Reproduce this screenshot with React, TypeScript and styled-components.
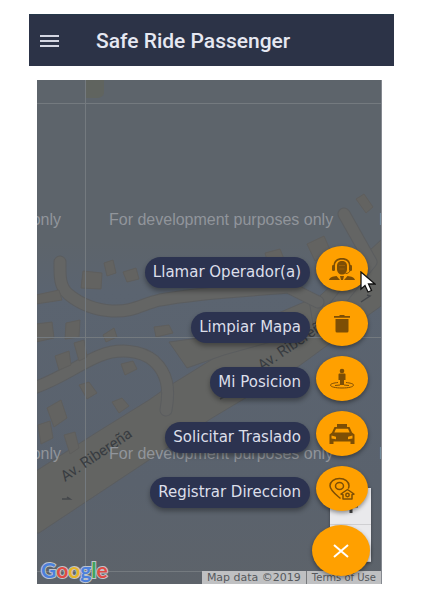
import React from "react";
import styled, { createGlobalStyle } from "styled-components";

const GlobalStyle = createGlobalStyle`
  *, *::before, *::after { box-sizing: border-box; }
  body { margin: 0; background: #fff; font-family: "DejaVu Sans", sans-serif; }
`;

const Page = styled.div`
  display: flex;
  flex-direction: column;
  gap: 14px;
  min-height: 100vh;
  padding: 14px 28px 5px 29px;
`;

const Header = styled.header`
  display: flex;
  align-items: center;
  gap: 36px;
  height: 52px;
  padding: 0 10px;
  background: #2c3347;
  border-top: 1px solid #25384a;
`;

const MenuButton = styled.button`
  display: flex;
  padding: 0;
  border: 0;
  background: none;
  color: #d4d6e2;
`;

const Title = styled.h1`
  margin: 0;
  color: #e6e8f2;
  font: 500 21px/24px Roboto, sans-serif;
  white-space: nowrap;
`;

const MapPanel = styled.main`
  position: relative;
  display: flex;
  flex: 1;
  flex-direction: column;
  justify-content: flex-end;
  margin: 0 12px 0 8px;
  padding: 165px 11px 8px 8px;
  overflow: hidden;
  background: #5d646b;
  border-right: 1px solid #858990;
`;

const MapDrawing = styled.svg`
  position: absolute;
  inset: 0;
  width: 100%;
  height: 100%;
`;

const ZoomControl = styled.div`
  position: absolute;
  right: 10px;
  bottom: 22px;
  display: flex;
  flex-direction: column;
  width: 41px;
  background: #e9e9ec;
  box-shadow: 0 1px 3px #0005;
`;

const ZoomButton = styled.button`
  display: grid;
  place-items: center;
  height: 37px;
  padding: 0;
  border: 0;
  border-bottom: 1px solid #cfcfd2;
  background: none;
  color: #444;
`;

const Attribution = styled.footer`
  position: absolute;
  right: 0;
  bottom: 0;
  display: flex;
  gap: 5px;
  height: 13px;
  padding: 0 5px;
  background: #bfc0c2;
  color: #55585c;
  font-size: 10px;
  line-height: 13px;
  white-space: nowrap;
`;

const Credit = styled.span`
  font-size: 11px;
`;

const Divider = styled.span`
  width: 1px;
  background: #77797c;
`;

const TermsLink = styled.a`
  color: inherit;
  text-decoration: none;
`;

const Actions = styled.div`
  position: relative;
  display: flex;
  flex-direction: column;
  align-items: flex-end;
  gap: 10px;
`;

const ActionRow = styled.div`
  display: flex;
  align-items: flex-end;
  gap: 6px;
  margin-right: 2px;
`;

const ActionLabel = styled.label`
  margin-bottom: 3px;
  padding: 0 9px 0 8px;
  border-radius: 16px;
  background: #2c3350;
  box-shadow: 0 3px 5px #0005;
  color: #dcdfea;
  font-size: 15px;
  line-height: 31px;
  white-space: nowrap;
`;

const RoundButton = styled.button<{ $main?: boolean }>`
  display: grid;
  place-items: center;
  width: ${(p) => (p.$main ? 58 : 52)}px;
  height: ${(p) => (p.$main ? 51 : 45)}px;
  margin-top: ${(p) => (p.$main ? 4 : 0)}px;
  padding: 0;
  border: 0;
  border-radius: 50%;
  background: #ffa000;
  box-shadow: 0 2px 4px #0006;
  color: ${(p) => (p.$main ? "#fff" : "#7d4e05")};
`;

const Pointer = styled.svg`
  position: absolute;
  top: 25px;
  right: -6px;
  pointer-events: none;
`;

const OperatorIcon = () => (
  <svg width="28" height="24" viewBox="0 0 28 24" fill="currentColor">
    <path d="M5.500 9C5.500 3.500 9 1 14 1s8.500 2.500 8.500 8h-1.500C21 4.800 18 2.800 14 2.800S7 4.800 7 9z" />
    <path d="M9 9c0-3.500 2-5 5-5s5 1.500 5 5v3c0 3.500-2.200 5.500-5 5.500S9 15.500 9 12z" />
    <rect x="4" y="8" width="3" height="6" rx="1.300" />
    <rect x="21" y="8" width="3" height="6" rx="1.300" />
    <path d="M22 13.500c-.5 2-2 3-4.500 3" fill="none" stroke="currentColor" strokeWidth="1" />
    <path d="M1 23c.4-2.500 3.500-3.500 7.500-4l3.500 4zM27 23c-.4-2.500-3.500-3.500-7.500-4L16 23zM12 19h4l-1 4h-2z" />
    <path d="M11 8.500h6M11.500 12h5" stroke="#a96905" strokeWidth=".7" />
  </svg>
);

const TrashIcon = () => (
  <svg width="18" height="20" viewBox="0 0 18 20" fill="currentColor">
    <path d="M1 2h5l1-1h4l1 1h5v1.800H1zM2.500 5h13v12a1.500 1.500 0 0 1-1.500 1.500H4A1.500 1.500 0 0 1 2.500 17z" />
  </svg>
);

const PositionIcon = () => (
  <svg width="26" height="22" viewBox="0 0 26 22" fill="currentColor">
    <circle cx="13" cy="3" r="2.300" />
    <path d="M9.500 6.500q0-1 1-1h5q1 0 1 1v5.500h-1.500V17h-4v-5H9.500z" />
    <path d="M9 14.500c-4 .4-7.500 1.300-7.500 2.500 0 1.900 5 3 11.500 3s11.500-1.100 11.500-3c0-1.200-3.500-2.100-7.500-2.500M6 17.500l5-.5M20 17.500l-5-.5" fill="none" stroke="currentColor" />
  </svg>
);

const TaxiIcon = () => (
  <svg width="28" height="22" viewBox="0 0 28 22" fill="currentColor" fillRule="evenodd">
    <path d="M9 1h10v3h2.500L24 9.500l2.500 2V21h-4v-2.500h-17V21h-4v-9.500L4 9.500 6.500 4H9zM8 5.800 6.300 9.500h15.400L20 5.800zM3.500 12.500v3l4.500.8v-2.500zM24.500 12.500v3l-4.500.8v-2.500z" />
  </svg>
);

const AddressIcon = () => (
  <svg width="28" height="24" viewBox="0 0 28 24" fill="none" stroke="currentColor" strokeWidth="1.500">
    <path d="M12.500 21.500C8.500 18 2 13.500 2 8.800 2 4.500 6 1.500 11.500 1.500S21 4.500 21 8.800c0 1-.2 2-.7 2.800" />
    <ellipse cx="11.500" cy="9" rx="4" ry="3.500" />
    <path d="M19.500 12.500 26 17l-2 .8V22h-9v-4.200l-2-.8z" strokeLinejoin="round" />
    <circle cx="19.500" cy="18" r="1.700" />
  </svg>
);

const ACTIONS = [
  { id: "operator", label: "Llamar Operador(a)", Icon: OperatorIcon },
  { id: "clear", label: "Limpiar Mapa", Icon: TrashIcon },
  { id: "position", label: "Mi Posicion", Icon: PositionIcon },
  { id: "ride", label: "Solicitar Traslado", Icon: TaxiIcon },
  { id: "address", label: "Registrar Direccion", Icon: AddressIcon },
];

const StreetMap = () => (
  <MapDrawing viewBox="37 80 345 504" preserveAspectRatio="xMaxYMax slice" aria-hidden="true">
    <defs>
      <linearGradient id="ground" x1="0" y1="0" x2="0" y2="1">
        <stop offset="0" stopColor="#5d646b" />
        <stop offset=".32" stopColor="#5d646b" />
        <stop offset=".42" stopColor="#5b6470" />
        <stop offset=".8" stopColor="#5a626d" />
        <stop offset="1" stopColor="#5d636a" />
      </linearGradient>
    </defs>
    <rect x="37" y="80" width="345" height="504" fill="url(#ground)" />
    <g fill="#636462" stroke="#5b5d5f" strokeWidth="1">
      <path d="M37 471 100 431 150 400 170 386 220 355 300 315 382 240V306L300 366 213 418 150 460 40 533H37z" />
      <path d="M170 342 230 334 310 300 315 330 225 355 188 368z" />
    </g>
    <g fill="none" strokeLinecap="round" strokeLinejoin="round">
      <g stroke="#5b5d5f" strokeWidth="13">
        <path d="M61 262c0 12-1 24 8 32 12 10 28 16 44 17 22 1 30-7 48-11 45-8 75-8 128-13l30 15" />
        <path d="M32 389C60 380 78 365 100 356c20-8 42-6 55 5 13 12 16 27 12 49" />
        <path d="M345 214 372 262 325 320" />
      </g>
      <g stroke="#646564" strokeWidth="11">
        <path d="M61 262c0 12-1 24 8 32 12 10 28 16 44 17 22 1 30-7 48-11 45-8 75-8 128-13l30 15" />
        <path d="M32 389C60 380 78 365 100 356c20-8 42-6 55 5 13 12 16 27 12 49" />
        <path d="M345 214 372 262 325 320" />
      </g>
    </g>
    <g fill="#636361" stroke="#5e5e5d">
      <path d="M86 80h19v13q-1 5-8 5H86z" fill="#60645f" stroke="none" />
      <path d="m84 271 19 2-1 16-20-1zM105 263l9-3 3 13-9 3zM124 272l13-4 3 11-12 3zM37 295l23-5 3 10-26 4zM67 323l14-3-1 17-14 2zM37 324l16-2 2 16-18 4zM75 343l10-3 3 17-8 4zM56 356l14-5 2 14-12 5zM104 335l11-7 3 9-11 5zM122 364l12-3 4 8-12 6zM80 385l10-3 8 11-10 6zM113 402l10-4 7 8-10 7zM48 408l14-8 6 18-13 9zM65 435l11-3 4 16-9 6zM39 425l12-4 3 17-12 6zM155 327l15-2 4 8-17 4zM357 199l8-5 9 13-7 6zM308 244l17-8 7 16-16 9zM266 253l15-4 4 10-16 5z" />
    </g>
    <path d="M63 499h8l-3-2M253 381l-32 18M362 302l9-6-3-1" fill="none" stroke="#44474b" strokeWidth="1.500" />
    <g stroke="#747a7f" strokeWidth="1">
      <path d="M37 103.500H382M37 337.500H382M37 571.500H382M86.500 80V584" />
    </g>
    <g fontFamily="Roboto, sans-serif" fontSize="15" fill="#383c41">
      <text transform="translate(66 482) rotate(-34)">Av. Ribereña</text>
      <text transform="translate(263 371) rotate(-34)">Av. Ribereña</text>
    </g>
    <g fontFamily="Liberation Sans, sans-serif" fontSize="16" fill="#91959b">
      {[225, 459].map((y) => (
        <g key={y}>
          <text x="62" y={y} textAnchor="end">only</text>
          <text x="110" y={y}>For development purposes only</text>
          <text x="380" y={y}>F</text>
        </g>
      ))}
    </g>
    <text x="42" y="578" fontFamily="Lato, sans-serif" fontWeight="700" fontSize="21" stroke="#bfc4cc" strokeWidth="2" paintOrder="stroke">
      <tspan fill="#4c80dc">G</tspan>
      <tspan fill="#df4b43">o</tspan>
      <tspan fill="#e6b52a">o</tspan>
      <tspan fill="#4c80dc">g</tspan>
      <tspan fill="#3fa45c">l</tspan>
      <tspan fill="#df4b43">e</tspan>
    </text>
  </MapDrawing>
);

export default function App() {
  return (
    <>
      <GlobalStyle />
      <Page>
        <Header>
          <MenuButton aria-label="Menu">
            <svg width="21" height="14" viewBox="0 0 21 14" stroke="currentColor" strokeWidth="2">
              <path d="M1 2h19M1 7h19M1 12h19" />
            </svg>
          </MenuButton>
          <Title>Safe Ride Passenger</Title>
        </Header>
        <MapPanel>
          <StreetMap />
          <ZoomControl>
            <ZoomButton aria-label="Zoom in">
              <svg width="14" height="14" viewBox="0 0 14 14" stroke="currentColor" strokeWidth="3">
                <path d="M7 0v14M0 7h14" />
              </svg>
            </ZoomButton>
            <ZoomButton aria-label="Zoom out">
              <svg width="14" height="14" viewBox="0 0 14 14" stroke="currentColor" strokeWidth="3">
                <path d="M0 7h14" />
              </svg>
            </ZoomButton>
          </ZoomControl>
          <Attribution>
            <Credit>Map data ©2019</Credit>
            <Divider />
            <TermsLink href="#terms">Terms of Use</TermsLink>
          </Attribution>
          <Actions>
            {ACTIONS.map(({ id, label, Icon }) => (
              <ActionRow key={id}>
                <ActionLabel htmlFor={id}>{label}</ActionLabel>
                <RoundButton id={id}>
                  <Icon />
                </RoundButton>
              </ActionRow>
            ))}
            <RoundButton $main aria-label="Close">
              <svg width="16" height="14" viewBox="0 0 16 14" stroke="currentColor" strokeWidth="2">
                <path d="M1 1l14 12M15 1 1 13" />
              </svg>
            </RoundButton>
            <Pointer width="16" height="22" viewBox="0 0 16 22" aria-hidden="true">
              <path d="M1 1v17l4-3.500 3 6.500 3.500-1.500-3-6.500H15z" fill="#fff" stroke="#111" strokeWidth="1.300" />
            </Pointer>
          </Actions>
        </MapPanel>
      </Page>
    </>
  );
}
